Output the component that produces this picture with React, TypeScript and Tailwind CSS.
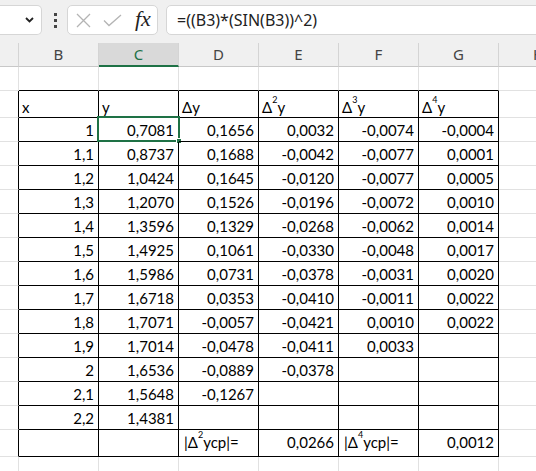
import React from "react";

const COLS = ["A", "B", "C", "D", "E", "F", "G", "H"];
const WIDTHS = ["w-[19px]", "w-[80px]", "w-[80px]", "w-[80px]", "w-[80px]", "w-[80px]", "w-[80px]", "w-[80px]"];

type Val = { t: React.ReactNode; left?: boolean } | null;

const n = (t: string): Val => (t ? { t } : null);
const l = (t: React.ReactNode): Val => ({ t, left: true });

function Delta({ p }: { p?: string }) {
  return (
    <span>
      Δ{p && <span className="relative -top-[10px] text-[9px] leading-none">{p}</span>}
    </span>
  );
}

const DATA: string[][] = [
  ["1", "0,7081", "0,1656", "0,0032", "-0,0074", "-0,0004"],
  ["1,1", "0,8737", "0,1688", "-0,0042", "-0,0077", "0,0001"],
  ["1,2", "1,0424", "0,1645", "-0,0120", "-0,0077", "0,0005"],
  ["1,3", "1,2070", "0,1526", "-0,0196", "-0,0072", "0,0010"],
  ["1,4", "1,3596", "0,1329", "-0,0268", "-0,0062", "0,0014"],
  ["1,5", "1,4925", "0,1061", "-0,0330", "-0,0048", "0,0017"],
  ["1,6", "1,5986", "0,0731", "-0,0378", "-0,0031", "0,0020"],
  ["1,7", "1,6718", "0,0353", "-0,0410", "-0,0011", "0,0022"],
  ["1,8", "1,7071", "-0,0057", "-0,0421", "0,0010", "0,0022"],
  ["1,9", "1,7014", "-0,0478", "-0,0411", "0,0033", ""],
  ["2", "1,6536", "-0,0889", "-0,0378", "", ""],
  ["2,1", "1,5648", "-0,1267", "", "", ""],
  ["2,2", "1,4381", "", "", "", ""],
];

type RowDef = { h: string; pb: string; cells: Val[] };

const ROWS: RowDef[] = [
  { h: "h-[24px]", pb: "pb-[3px]", cells: [] },
  {
    h: "h-[27px]",
    pb: "pb-[2px]",
    cells: [
      l("x"),
      l("y"),
      l(<><Delta />y</>),
      l(<><Delta p="2" />y</>),
      l(<><Delta p="3" />y</>),
      l(<><Delta p="4" />y</>),
    ],
  },
  ...DATA.map((r) => ({ h: "h-[24px]", pb: "pb-[3px]", cells: r.map(n) })),
  {
    h: "h-[27px]",
    pb: "pb-[6px]",
    cells: [
      null,
      null,
      l(<span className="pl-[2px]">|<Delta p="2" />ycp|=</span>),
      n("0,0266"),
      l(<span className="pl-[2px]">|<Delta p="4" />ycp|=</span>),
      n("0,0012"),
    ],
  },
  { h: "h-[24px]", pb: "pb-[3px]", cells: [] },
];

function Cell({ row, col, def }: { row: number; col: number; def: RowDef }) {
  // row 0 = sheet row 2; table is rows 1..15 of ROWS, columns B..G
  const inTableRow = row >= 1 && row <= 15;
  const inTableCol = col >= 1 && col <= 6;
  const blackRight = inTableRow && col <= 6;
  const blackBottom = inTableCol && row <= 15;
  const v = inTableCol ? def.cells[col - 1] : null;
  const selected = row === 2 && col === 2;
  return (
    <div
      className={`relative shrink-0 ${WIDTHS[col]} ${def.h} border-r border-b ${
        blackRight ? "border-r-black" : "border-r-[#e1e1e1]"
      } ${blackBottom ? "border-b-black" : "border-b-[#e1e1e1]"} flex items-end ${
        v && !v.left ? "justify-end pr-[4px]" : "justify-start pl-[3px]"
      } ${def.pb} text-[15px] leading-none text-black whitespace-nowrap`}
    >
      {v?.t}
      {selected && (
        <div className="absolute -left-[2px] -right-[2px] -top-[2px] -bottom-[1px] border-2 border-[#1e7145]">
          <div className="absolute -right-[4px] -bottom-[4px] w-[6px] h-[6px] bg-[#1e7145] border border-white" />
        </div>
      )}
    </div>
  );
}

export default function App() {
  return (
    <div className="w-[536px] h-[471px] overflow-hidden bg-white font-['Lato',sans-serif]">
      {/* formula bar */}
      <div className="h-[43px] bg-[#f0f0f0] flex items-start pt-[5px]">
        <div className="w-[42px] h-[30px] shrink-0 bg-white border border-l-0 border-[#d6d6d6] rounded-r-[5px] flex items-center justify-end pr-[7px]">
          <svg width="9" height="6" viewBox="0 0 9 6">
            <path d="M1 1 L4.5 4.5 L8 1" fill="none" stroke="#222" strokeWidth="1.8" />
          </svg>
        </div>
        <div className="w-[25px] h-[30px] shrink-0 flex flex-col items-center justify-center gap-[3px] pl-[1px]">
          <div className="w-[3px] h-[3px] bg-[#444]" />
          <div className="w-[3px] h-[3px] bg-[#444]" />
          <div className="w-[3px] h-[3px] bg-[#444]" />
        </div>
        <div className="w-[91px] h-[30px] shrink-0 bg-white border border-[#d6d6d6] rounded-[5px] flex items-center pl-[8px]">
          <svg width="15" height="15" viewBox="0 0 15 15">
            <path d="M1 1 L14 14 M14 1 L1 14" stroke="#b4b4b4" strokeWidth="1.3" fill="none" />
          </svg>
          <svg width="19" height="13" viewBox="0 0 19 13" className="ml-[12px]">
            <path d="M1 6.5 L6 11.5 L18 1" stroke="#b4b4b4" strokeWidth="1.3" fill="none" />
          </svg>
          <span className="ml-[13px] font-['Liberation_Serif',serif] italic text-[22px] leading-none text-[#222] -mt-[2px]">
            fx
          </span>
        </div>
        <div className="ml-[8px] w-[420px] h-[30px] shrink-0 bg-white border border-[#d6d6d6] rounded-[5px] flex items-center pl-[10px] font-['Noto_Sans',sans-serif] text-[16px] text-[#222]">
          =((B3)*(SIN(B3))^2)
        </div>
      </div>
      {/* column headers */}
      <div className="flex h-[24px] bg-[#f0f0f0]">
        {COLS.map((c, i) => (
          <div
            key={c}
            className={`shrink-0 ${WIDTHS[i]} h-[24px] border-r border-[#d4d4d4] flex items-center justify-center font-['Noto_Sans',sans-serif] text-[15px] ${
              i === 2
                ? "bg-[#d9d9d9] text-[#1e7145] border-b-2 border-b-[#1e7145]"
                : "text-[#444] border-b border-b-[#c8c8c8]"
            }`}
          >
            {i === 0 ? "" : c}
          </div>
        ))}
      </div>
      {ROWS.map((def, r) => (
        <div key={r} className="flex">
          {COLS.map((c, ci) => (
            <Cell key={c} row={r} col={ci} def={def} />
          ))}
        </div>
      ))}
    </div>
  );
}
